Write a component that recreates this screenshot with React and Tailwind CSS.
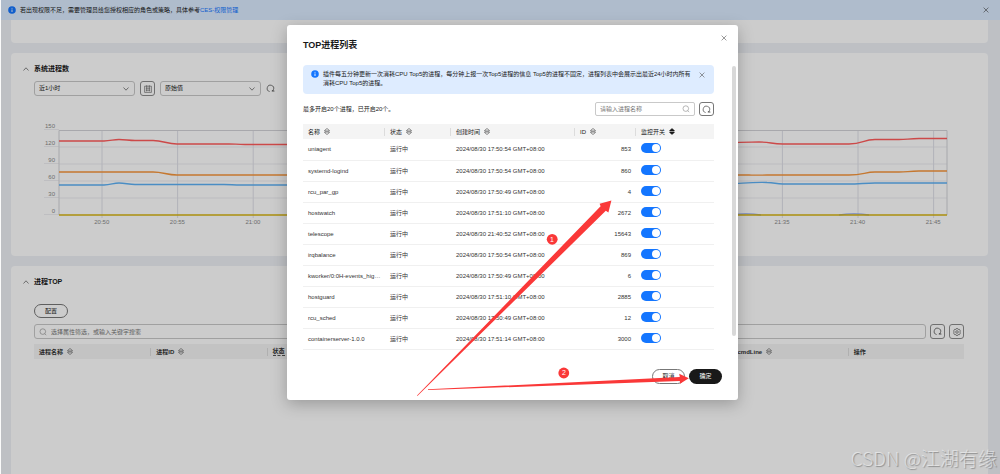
import React, { useState } from "react";

// Processes shown in the dialog
const PROCESSES = [
  { name: "uniagent", time: "2024/08/30 17:50:54 GMT+08:00", id: 853 },
  { name: "systemd-logind", time: "2024/08/30 17:50:54 GMT+08:00", id: 860 },
  { name: "rcu_par_gp", time: "2024/08/30 17:50:49 GMT+08:00", id: 4 },
  { name: "hostwatch", time: "2024/08/30 17:51:10 GMT+08:00", id: 2672 },
  { name: "telescope", time: "2024/08/30 21:40:52 GMT+08:00", id: 15643 },
  { name: "irqbalance", time: "2024/08/30 17:50:54 GMT+08:00", id: 869 },
  { name: "kworker/0:0H-events_highpri", time: "2024/08/30 17:50:49 GMT+08:00", id: 6 },
  { name: "hostguard", time: "2024/08/30 17:51:10 GMT+08:00", id: 2885 },
  { name: "rcu_sched", time: "2024/08/30 17:50:49 GMT+08:00", id: 12 },
  { name: "containerserver-1.0.0", time: "2024/08/30 17:51:14 GMT+08:00", id: 3000 },
];

const TIMES = ["20:50", "20:55", "21:00", "21:05", "21:10", "21:15", "21:20", "21:25", "21:30", "21:35", "21:40", "21:45"];
const Y_LABELS = [150, 120, 90, 60, 30, 0];

// Chart series, drawn in a 888 x 85 box
const SERIES = [
  { color: "#ff5c5c", d: "M0 11H45C52 11 54 9.5 60 9.5S70 10.5 76 10.5H94C104 10.5 108 14 118 14H170C176 14 178 14.5 186 14.5H650C670 12.5 680 12.5 700 12C712 12 712 14 724 14H790C804 14 804 9.5 816 9.5H840C848 9.5 850 8.5 860 8.5H888" },
  { color: "#f7963c", d: "M0 42H94C104 42 108 45 118 45H690C696 45.5 700 45 708 45H790C804 45 806 42 816 42H840C848 42 850 41 860 41H888" },
  { color: "#5db1f5", d: "M0 55H45C52 55 54 53 60 53S70 54.5 76 54.5H165C172 54.5 174 55 182 55H660C680 53 690 52 708 52.5C716 52.5 716 54 724 54H790C800 54 806 53 816 53H888" },
  { color: "#8fa6ee", d: "M672 85C682 83.5 692 83.5 702 85M780 85C790 83.5 800 83.5 810 85" },
  { color: "#d6b312", d: "M0 85H888" },
];

function InfoIcon() {
  return (
    <svg viewBox="0 0 8 8" className="size-2 shrink-0" aria-hidden="true">
      <circle cx="4" cy="4" r="3.8" fill="#1476ff" />
      <path d="M4 3.5V6M4 1.9V2.7" stroke="#fff" strokeWidth="0.9" />
    </svg>
  );
}

function CloseIcon() {
  return (
    <svg viewBox="0 0 6 6" className="size-1.5" fill="none" stroke="currentColor" strokeWidth="0.6" aria-hidden="true">
      <path d="M0.6 0.6 5.4 5.4M5.4 0.6 0.6 5.4" />
    </svg>
  );
}

function SortIcon({ filled }) {
  return (
    <svg viewBox="0 0 6 7" className="h-[7px] w-1.5 shrink-0" fill={filled ? "currentColor" : "none"} stroke="currentColor" strokeWidth="0.5" strokeLinejoin="round" aria-hidden="true">
      <path d="M0.7 3V2.4L3 0.5 5.3 2.4V3ZM0.7 4V4.6L3 6.5 5.3 4.6V4Z" />
    </svg>
  );
}

function RefreshIcon() {
  return (
    <svg viewBox="0 0 10 10" className="size-[9px] text-[#444]" fill="none" stroke="currentColor" strokeWidth="0.8" aria-hidden="true">
      <path d="M4 8.4A3.6 3.6 0 1 1 8.3 6.2L8 7.6" />
      <path d="M9.4 7.9H6.6L7.6 6.6" />
    </svg>
  );
}

function SearchIcon() {
  return (
    <svg viewBox="0 0 8 8" className="size-2 shrink-0 text-[#888]" fill="none" stroke="currentColor" strokeWidth="0.6" aria-hidden="true">
      <circle cx="3.8" cy="3.6" r="2.8" />
      <path d="M5.8 5.7 7.2 7.2" />
    </svg>
  );
}

function Chevron({ up }) {
  return (
    <svg viewBox="0 0 6 4" className="h-1 w-1.5 text-[#555]" fill="none" stroke="currentColor" strokeWidth="0.7" aria-hidden="true">
      <path d={up ? "M0.5 3.5 3 0.8 5.5 3.5" : "M0.5 0.5 3 3.2 5.5 0.5"} />
    </svg>
  );
}

function IconButton({ label, children }) {
  return (
    <button type="button" aria-label={label} className="flex size-[15px] shrink-0 items-center justify-center rounded-[3px] border border-[#8c8c8c]">
      {children}
    </button>
  );
}

function Select({ label, option }) {
  return (
    <div className="relative w-[101px]">
      <select aria-label={label} className="block h-[15px] w-full appearance-none rounded-[3px] border border-[#c9c9c9] px-1 leading-[13px]">
        <option>{option}</option>
      </select>
      <span className="pointer-events-none absolute inset-y-0 right-1.5 flex items-center">
        <Chevron />
      </span>
    </div>
  );
}

function CardTitle({ children }) {
  return (
    <div className="flex items-center gap-[5px] pl-3 pt-[11px]">
      <button type="button" aria-label="收起"><Chevron up /></button>
      <h2 className="text-[7px] font-bold leading-[9px]">{children}</h2>
    </div>
  );
}

function Chart() {
  return (
    <div className="ml-[33px] mr-[41px] mt-[17px] flex text-[#8a8a8a]">
      <div className="w-[15px] shrink-0">
        {Y_LABELS.map((value) => (
          <div key={value} className="flex h-[17px] items-end justify-end border-b border-[#eeeef2] pr-1 leading-[6px]">{value}</div>
        ))}
      </div>
      <div className="min-w-0 flex-1 pt-[17px]">
        <svg viewBox="0 0 888 85" preserveAspectRatio="none" className="block h-[85px] w-full overflow-visible" fill="none">
          {[17, 34, 51, 68].map((y) => (
            <path key={y} d={`M0 ${y}H888`} stroke="#ececf1" />
          ))}
          {TIMES.map((time, i) => (
            <path key={time} d={`M${43 + i * 75.6} 0V88`} stroke="#dfe0e8" />
          ))}
          <path d="M0 85V0.5H888V85" stroke="#d2d3d8" />
          {SERIES.map((line) => (
            <path key={line.color} d={line.d} stroke={line.color} strokeWidth="1.3" />
          ))}
        </svg>
        <div className="-mr-6 grid grid-cols-12 pl-[5px] pt-[3px] text-center leading-2">
          {TIMES.map((time) => (
            <span key={time}>{time}</span>
          ))}
        </div>
      </div>
    </div>
  );
}

function TopCard() {
  const columns = ["进程名称", "进程ID", "状态", "用户", "CPU使用率", "内存使用率", "cmdLine", "操作"];
  return (
    <section className="flex-1 rounded-t-[4px] bg-white">
      <CardTitle>进程TOP</CardTitle>
      <div className="pl-[23px] pr-6">
        <button type="button" className="mt-[18px] block h-[14px] w-[34px] rounded-full border border-[#777] leading-3">配置</button>
        <div className="mt-1.5 flex gap-1">
          <label className="flex h-[15px] flex-1 items-center gap-1 rounded-[3px] border border-[#c9c9c9] px-1">
            <SearchIcon />
            <input aria-label="搜索进程" placeholder="选择属性筛选，或输入关键字搜索" className="min-w-0 flex-1 outline-none placeholder:text-[#777]" />
          </label>
          <IconButton label="刷新"><RefreshIcon /></IconButton>
          <IconButton label="设置">
            <svg viewBox="0 0 8 8" className="size-2 text-[#444]" fill="none" stroke="currentColor" strokeWidth="0.6" aria-hidden="true">
              <path d="M3.1 0.6H4.9L5.3 1.5 6.5 1.4 7.4 3 6.8 4 7.4 5 6.5 6.6 5.3 6.5 4.9 7.4H3.1L2.7 6.5 1.5 6.6 0.6 5 1.2 4 0.6 3 1.5 1.4 2.7 1.5Z" />
              <circle cx="4" cy="4" r="1.3" />
            </svg>
          </IconButton>
        </div>
        <table className="mt-[5px] w-full table-fixed text-[#333]">
          <thead>
            <tr className="h-[15px] bg-[#f4f4f4]">
              {columns.map((column, i) => (
                <th key={column} className="p-0 text-left">
                  <div className={`flex h-2 items-center gap-1 pl-[5px] ${i > 0 ? "border-l border-[#dcdcdc]" : ""}`}>
                    <span className={column === "状态" ? "border-b border-dashed border-[#555]" : ""}>{column}</span>
                    {column !== "操作" && <SortIcon />}
                  </div>
                </th>
              ))}
            </tr>
          </thead>
        </table>
      </div>
    </section>
  );
}

function ProcessDialog() {
  const [keyword, setKeyword] = useState("");
  const [disabled, setDisabled] = useState([]); // ids with monitoring switched off

  const toggle = (id) => {
    setDisabled(disabled.includes(id) ? disabled.filter((x) => x !== id) : [...disabled, id]);
  };

  const columns = [
    { title: "名称", width: "w-[81px]" },
    { title: "状态", width: "w-[66px]" },
    { title: "创建时间", width: "w-[124px]" },
    { title: "ID", width: "w-[61px]" },
    { title: "监控开关", width: "w-auto" },
  ];
  const rows = PROCESSES.filter((p) => p.name.includes(keyword));

  return (
    <div role="dialog" aria-labelledby="dialog-title" className="relative w-[451px] rounded-[3px] bg-white pt-[15px] shadow-[0_4px_16px_rgba(0,0,0,0.25)]">
      <h1 id="dialog-title" className="px-4 text-[9px] font-bold leading-[10px]">TOP进程列表</h1>
      <button type="button" aria-label="关闭" className="absolute right-[11px] top-[10px] text-[#555]"><CloseIcon /></button>

      <div className="mt-[15px] flex pl-4 pr-0.5">
        <div className="min-w-0 flex-1">
          <div className="flex items-start rounded-[4px] bg-[#deecff] pb-1.5 pl-2 pr-[9px] pt-[5px]">
            <InfoIcon />
            <p className="ml-1 flex-1 leading-[9px]">
              插件每五分钟更新一次消耗CPU Top5的进程，每分钟上报一次Top5进程的信息 Top5的进程不固定，进程列表中会展示出最近24小时内所有消耗CPU Top5的进程。
            </p>
            <button type="button" aria-label="关闭提示" className="ml-2 mt-0.5 text-[#555]"><CloseIcon /></button>
          </div>

          <div className="mt-2 flex items-center gap-1">
            <p className="flex-1">最多开启20个进程，已开启20个。</p>
            <label className="flex h-[14px] w-[100px] items-center rounded-[2px] border border-[#c9c9c9] px-1">
              <input
                aria-label="进程名称"
                value={keyword}
                onChange={(e) => setKeyword(e.target.value)}
                placeholder="请输入进程名称"
                className="min-w-0 flex-1 outline-none placeholder:text-[#777]"
              />
              <SearchIcon />
            </label>
            <button type="button" aria-label="刷新列表" className="flex h-[14px] w-[15px] items-center justify-center rounded-[3px] border border-[#777]"><RefreshIcon /></button>
          </div>

          <table className="mt-2 w-full table-fixed">
            <thead>
              <tr className="h-[15px] bg-[#f4f4f4]">
                {columns.map(({ title, width }, i) => (
                  <th key={title} className={`p-0 text-left font-normal ${width}`}>
                    <div className={`flex h-2 items-center gap-1 pl-[5px] ${i > 0 ? "border-l border-[#dcdcdc]" : ""}`}>
                      {title}
                      <SortIcon filled={title === "监控开关"} />
                    </div>
                  </th>
                ))}
              </tr>
            </thead>
            <tbody>
              {rows.map((p) => (
                <tr key={p.id} className="h-[21px] border-b border-[#f0f0f0] text-[#333]">
                  <td className="truncate py-0 pl-[5px] pr-0.5">{p.name}</td>
                  <td className="py-0 pl-1.5">运行中</td>
                  <td className="py-0 pl-1.5">{p.time}</td>
                  <td className="py-0 pr-1 text-right">{p.id}</td>
                  <td className="pb-0.5 pl-1.5 pt-0">
                    <input
                      type="checkbox"
                      role="switch"
                      aria-label={`监控 ${p.name}`}
                      checked={!disabled.includes(p.id)}
                      onChange={() => toggle(p.id)}
                      className="flex h-2.5 w-5 appearance-none items-center rounded-full bg-[#bbb] px-px before:size-2 before:rounded-full before:bg-white checked:justify-end checked:bg-[#1476ff]"
                    />
                  </td>
                </tr>
              ))}
            </tbody>
          </table>
        </div>
        <div className="ml-[18px] mt-px h-[270px] w-1 rounded-full bg-[#d8d8d8]" />
      </div>

      <div className="mt-[19px] flex justify-end gap-1 pb-4 pr-4">
        <button type="button" className="h-[15px] w-[33px] rounded-full border border-[#777] leading-[13px]">取消</button>
        <button type="button" className="h-[15px] w-[33px] rounded-full bg-[#191919] leading-[15px] text-white">确定</button>
      </div>
    </div>
  );
}

// Step arrows drawn over the dialog
function Annotations() {
  return (
    <svg width="1000" height="474" className="pointer-events-none absolute left-0 top-0" fill="#fa3838" aria-hidden="true">
      <path d="M417 395.6 600.6 206.2 599.6 203.8 611.4 200.6 608.4 212.4 605.8 210.8 417.4 396Z" />
      <path d="M428 389.3 679.8 377 679.2 373.8 688.8 378.2 680 383.8 679.8 381 428 390Z" />
      <circle cx="552.2" cy="239.3" r="5.4" />
      <circle cx="563.8" cy="373" r="5.4" />
      <g fill="#fff" textAnchor="middle" className="text-[7px]">
        <text x="552" y="242">1</text>
        <text x="564" y="375">2</text>
      </g>
    </svg>
  );
}

export default function App() {
  return (
    <div className="relative flex h-screen flex-col overflow-hidden border-l border-[#fafafa] bg-[#eef0f6] font-['Liberation_Sans','Noto_Sans_CJK_SC',sans-serif] text-[6px] leading-2 text-[#191919]">
      <div className="flex h-5 shrink-0 items-center bg-[#dbebff] pl-[7px] pr-[11px]">
        <InfoIcon />
        <p className="ml-1 flex-1">
          若出现权限不足，需要管理员给您授权相应的角色或策略，具体参考<a href="#" className="text-[#1476ff]">CES-权限管理</a>
        </p>
        <button type="button" aria-label="关闭通知" className="text-[#444]"><CloseIcon /></button>
      </div>

      <main className="flex flex-1 flex-col gap-[10px] pl-[10px] pr-3">
        <section className="h-[23px] rounded-b-[4px] bg-white" />
        <section className="rounded-[4px] bg-white pb-[30px]">
          <CardTitle>系统进程数</CardTitle>
          <div className="mt-2 flex items-center gap-[5px] pl-[23px]">
            <Select label="时间范围" option="近1小时" />
            <IconButton label="选择日期">
              <svg viewBox="0 0 8 8" className="size-2 text-[#555]" fill="none" stroke="currentColor" strokeWidth="0.6" aria-hidden="true">
                <path d="M0.6 1.2H7.4V7.4H0.6ZM1.8 3.2H6.2M1.8 5.2H6.2M2.7 0.2V6.4M5.3 0.2V6.4" />
              </svg>
            </IconButton>
            <Select label="统计方式" option="原始值" />
            <button type="button" aria-label="刷新图表"><RefreshIcon /></button>
          </div>
          <Chart />
        </section>
        <TopCard />
      </main>

      <div className="absolute inset-0 -left-px flex items-start justify-center bg-black/20 pl-[25px] pt-[25px]">
        <ProcessDialog />
        <Annotations />
      </div>

      <div className="pointer-events-none absolute bottom-1 right-[3px] font-['Noto_Sans_CJK_SC',sans-serif] text-[19px] font-light leading-6 text-white/50 [text-shadow:1px_1px_1px_rgba(0,0,0,0.3)]">
        CSDN @江湖有缘
      </div>
    </div>
  );
}
